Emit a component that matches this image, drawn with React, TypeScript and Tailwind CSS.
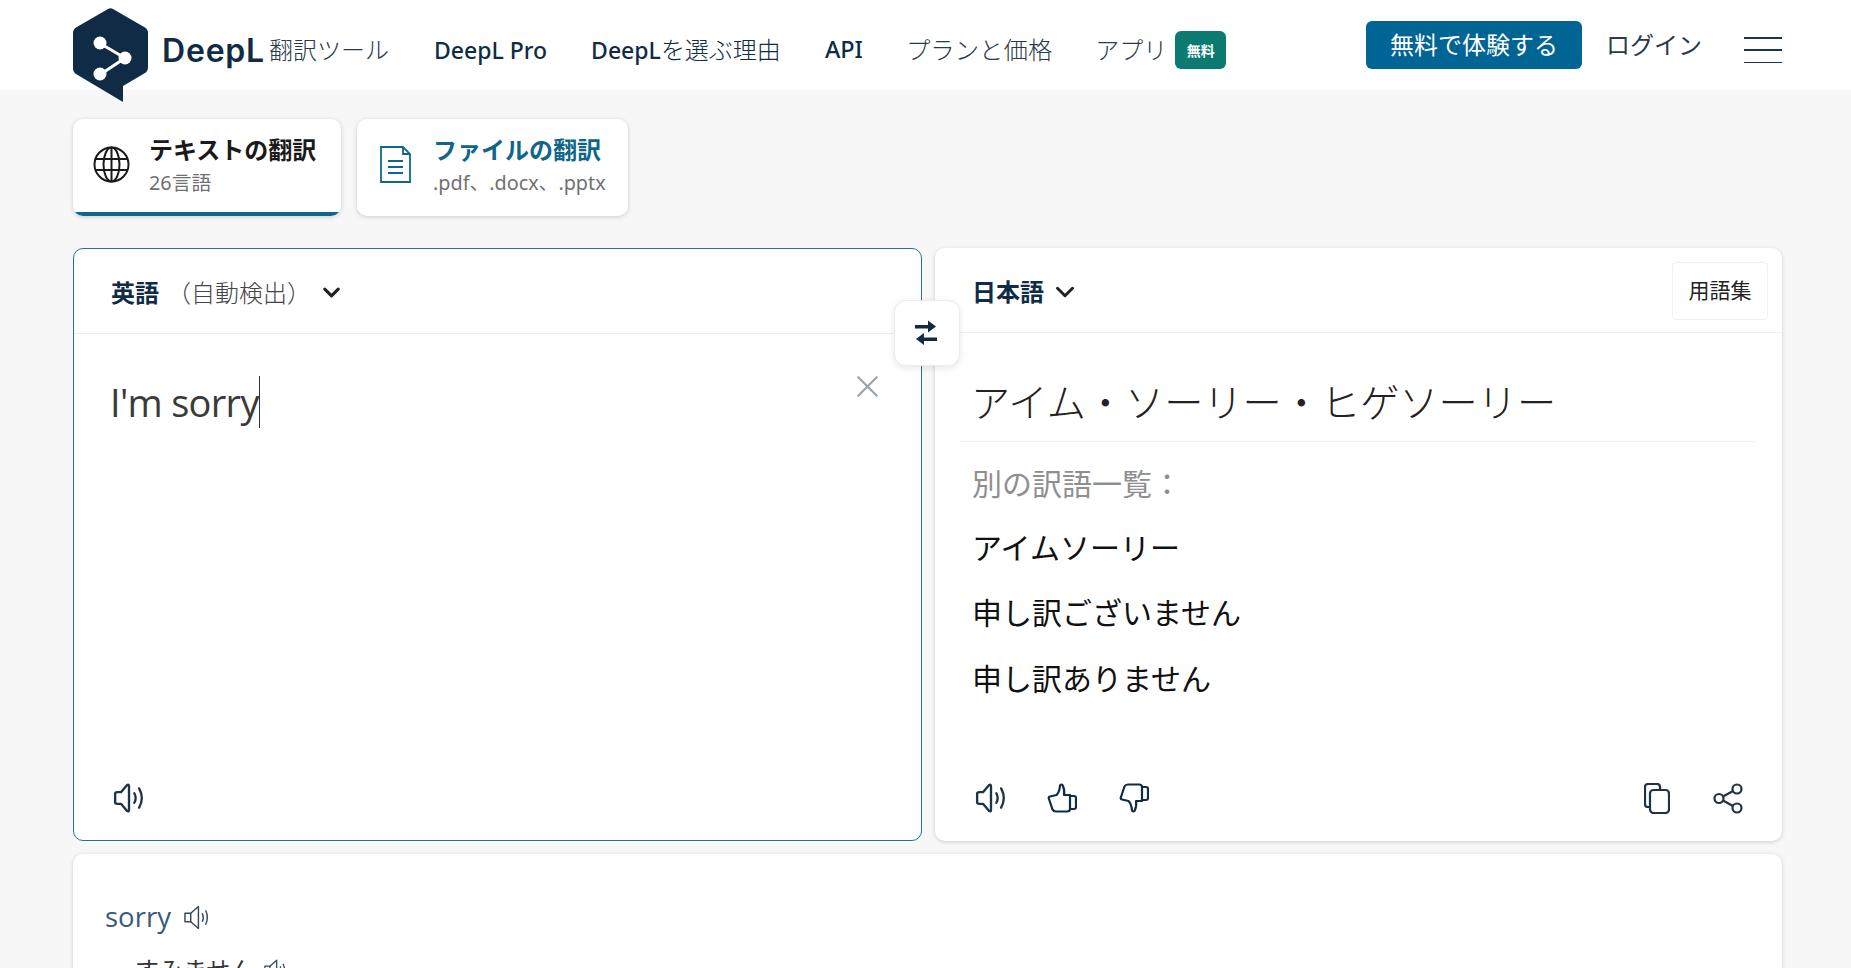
import { ChevronDown, X } from 'lucide-react';

const NAVY = '#0f2b46';

function Logo() {
  return (
    <svg className="w-[75px] h-[94px] shrink-0" viewBox="0 0 75 94" aria-hidden="true">
      <path
        d="M35 1 Q37.500 -0.500 40 1 L72 19.500 Q75 21.500 75 25 L75 59 Q75 63 72 65 L50 78 L50 94 L3 66 Q0 64 0 60 L0 25 Q0 21.500 3 19.500 Z"
        fill="#0f2b46"
      />
      <path d="M28 36 L52 50 L28 66" fill="none" stroke="#fff" strokeWidth="3" />
      <circle cx="27" cy="35" r="6.500" fill="#fff" />
      <circle cx="52" cy="50" r="6.500" fill="#fff" />
      <circle cx="27" cy="66" r="6.500" fill="#fff" />
    </svg>
  );
}

function Speaker({ className }: { className: string }) {
  return (
    <svg className={className} viewBox="0 0 30 28" fill="none" stroke="currentColor" strokeWidth="2.200" strokeLinecap="round" strokeLinejoin="round" aria-hidden="true">
      <path d="M2 10 L2 18 Q2 19.500 4 19.500 L7.500 19.500 L13 26 Q15 27.500 15 25 L15 3 Q15 .8 13 2 L7.500 8.500 L4 8.500 Q2 8.500 2 10 Z" />
      <path d="M20 9.500 Q22.500 14 20 18.500" />
      <path d="M24.500 5 Q29.500 14 24.500 23" />
    </svg>
  );
}

// the dictionary section has a thinner speaker with a box behind the cone
function SmallSpeaker({ className }: { className: string }) {
  return (
    <svg className={className} viewBox="0 0 26 26" fill="none" stroke="currentColor" strokeWidth="1.500" strokeLinejoin="round" aria-hidden="true">
      <path d="M1 8.500 H7 V17.500 H1 Z" />
      <path d="M7 8.500 L15 1.500 V24.500 L7 17.500" />
      <path d="M19 8.500 Q21 13 19 17.500" />
      <path d="M22.500 5.500 Q26 13 22.500 20.500" />
    </svg>
  );
}

function ThumbUp({ down }: { down?: boolean }) {
  return (
    <svg className={`w-[30px] h-[30px] ${down ? 'rotate-180 -scale-x-100' : ''}`} viewBox="0 0 30 30" fill="none" stroke={NAVY} strokeWidth="2.200" strokeLinecap="round" strokeLinejoin="round" aria-hidden="true">
      <path d="M2 16 Q1 14 3 13.500 L9.500 12 Q12.500 9 13 2.500 Q14 .8 15.500 2 Q18 7 17 12 L23 12 L23 26 Q23 28.500 20 28.500 L9 28.500 Q6.500 28.500 5.500 26.500 Z" />
      <path d="M23 13 L27 13 Q29 13 29 15 L29 24 Q29 26 27 26 L23 26" />
    </svg>
  );
}

function Tab({ title, sub, active, icon }: { title: string; sub: string; active?: boolean; icon: React.ReactNode }) {
  return (
    <div className={`relative h-[97px] flex items-center rounded-[10px] bg-white overflow-hidden shadow-[0_1px_4px_rgba(30,50,70,0.22)] ${active ? 'w-[268px] pl-[20px]' : 'w-[271px] pl-[23px]'}`}>
      <div className="mb-[6px] flex">{icon}</div>
      <div className={`flex flex-col mb-[4px] ${active ? 'ml-[19px]' : 'ml-[22px]'}`}>
        <span className={`text-[24px] leading-[32px] font-bold ${active ? 'text-[#1a1a1a]' : 'text-[#0f6688]'}`}>{title}</span>
        <span className="text-[19.800px] leading-[30px] text-[#707070] mt-[2px]">{sub}</span>
      </div>
      {active && <div className="absolute left-0 right-0 bottom-0 h-[4px] bg-[#0f6688]" />}
    </div>
  );
}

export default function App() {
  return (
    <div className="h-[968px] w-[1851px] overflow-hidden bg-[#f7f7f7] font-['Noto_Sans','Noto_Sans_CJK_JP',sans-serif] text-[#1a1a1a]">
      <header className="h-[90px] bg-white pl-[73px] pr-[69px] flex items-start">
        <div className="mt-[8px] relative z-10"><Logo /></div>
        <span className="ml-[14px] mt-[29px] text-[32px] leading-[44px] font-semibold tracking-[0.800px] text-[#0f2b46] font-['Inter',sans-serif]">DeepL</span>
        <nav className="flex items-center h-[100px] text-[24px] text-[#0f2b46] font-light">
          <span className="ml-[4px] text-[#2b3a48]">翻訳ツール</span>
          <span className="ml-[45px] font-medium text-[23px]">DeepL Pro</span>
          <span className="ml-[44px]"><span className="font-medium text-[23px]">DeepL</span>を選ぶ理由</span>
          <span className="ml-[44px] font-medium text-[23.500px]">API</span>
          <span className="ml-[43px] text-[24.400px] text-[#2b3a48]">プランと価格</span>
          <span className="ml-[43px] text-[#2b3a48]">アプリ</span>
          <span className="ml-[8px] w-[51px] h-[38px] rounded-[6px] bg-[#0b7a70] text-white text-[14px] font-bold flex items-center justify-center">無料</span>
        </nav>
        <button className="ml-auto mt-[21px] w-[216px] h-[48px] rounded-[6px] bg-[#006494] text-white text-[24px] leading-none">無料で体験する</button>
        <span className="ml-[24px] mt-[28px] text-[24px] leading-[34px] text-[#2b3a48]">ログイン</span>
        <div className="ml-[42px] mt-[37px] w-[38px] h-[26px] flex flex-col justify-between">
          <div className="h-[1.5px] bg-[#1f3347]" />
          <div className="h-[1.5px] bg-[#1f3347]" />
          <div className="h-[1.5px] bg-[#1f3347]" />
        </div>
      </header>

      <main className="pl-[73px] pr-[69px]">
        <div className="flex gap-[16px] pt-[29px]">
          <Tab
            active
            title="テキストの翻訳"
            sub="26言語"
            icon={
              <svg className="w-[37px] h-[37px] shrink-0" viewBox="0 0 37 37" fill="none" stroke="#1a1a1a" strokeWidth="2" aria-hidden="true">
                <circle cx="18.500" cy="18.500" r="17" />
                <ellipse cx="18.500" cy="18.500" rx="8" ry="17" />
                <path d="M18.500 1.500 V35.500 M2.500 13 H34.500 M2.500 24 H34.500" />
              </svg>
            }
          />
          <Tab
            title="ファイルの翻訳"
            sub=".pdf、.docx、.pptx"
            icon={
              <svg className="w-[31px] h-[37px] shrink-0" viewBox="0 0 31 37" fill="none" stroke="#0f6688" strokeWidth="1.800" aria-hidden="true">
                <path d="M1 1 H23 L30 8 V36 H1 Z M23 1 V8 H30" />
                <path d="M8 15 H23 M8 21 H23 M8 27 H23" />
              </svg>
            }
          />
        </div>

        <div className="relative flex gap-[13px] mt-[32px] h-[593px]">
          <section className="w-[849px] flex flex-col rounded-[10px] bg-white border border-[#2a6f8f] relative">
            <div className="h-[85px] flex items-center pl-[37px] pt-[3px] border-b border-[#eeeeee]">
              <span className="text-[24px] font-bold text-[#0f2b46]">英語</span>
              <span className="ml-[8px] text-[24px] text-[#444] font-light">（自動検出）</span>
              <ChevronDown className="ml-[7px] mb-[1px] w-[27px] h-[27px] text-[#222]" strokeWidth={2.800} />
            </div>
            <div className="flex-1 relative pl-[36px] pt-[42px]">
              <div className="flex items-center h-[52px]">
                <span className="text-[38px] leading-[52px] text-[#3a3a3a] font-['Open_Sans',sans-serif] tracking-[-0.700px]">I'm sorry</span>
                <span className="w-px h-[52px] bg-[#333]" />
              </div>
              <X className="absolute right-[35px] top-[34px] w-[37px] h-[37px] text-[#9aa3aa]" strokeWidth={1.400} />
            </div>
            <div className="h-[85px] pl-[39px] pt-[28px] text-[#1f3347]">
              <Speaker className="w-[32px] h-[30px]" />
            </div>
          </section>

          <section className="flex-1 flex flex-col rounded-[10px] bg-white shadow-[0_1px_4px_rgba(30,50,70,0.2)]">
            <div className="h-[85px] shrink-0 flex items-center pl-[37px] pr-[14px] pt-[4px] border-b border-[#eeeeee]">
              <span className="text-[24px] font-bold text-[#0f2b46]">日本語</span>
              <ChevronDown className="ml-[6px] w-[30px] h-[30px] text-[#222]" strokeWidth={2.400} />
              <button className="ml-auto mb-[3px] w-[96px] h-[58px] rounded-[4px] border border-[#f0f0f0] text-[21px] text-[#222]">用語集</button>
            </div>
            <div className="mx-[26px] h-[109px] flex items-center pl-[10px] pt-[30px] border-b border-[#eeeeee] text-[39.200px] text-[#222] font-light whitespace-nowrap">
              アイム・ソーリー・ヒゲソーリー
            </div>
            <div className="pl-[37px] pt-[19px] text-[30px] leading-[45px]">
              <div className="text-[#8f8f8f]">別の訳語一覧：</div>
              <div className="mt-[19px] text-[#111]">アイムソーリー</div>
              <div className="mt-[20px] text-[#111]">申し訳ございません</div>
              <div className="mt-[21px] text-[#111]">申し訳ありません</div>
            </div>
            <div className="mt-auto h-[85px] pl-[40px] pr-[39px] pt-[27px] flex items-start text-[#1f3347]">
              <Speaker className="w-[32px] h-[30px]" />
              <div className="ml-[40px]"><ThumbUp /></div>
              <div className="ml-[42px]"><ThumbUp down /></div>
              <svg className="ml-auto w-[26px] h-[31px]" viewBox="0 0 26 31" fill="none" stroke="currentColor" strokeWidth="2.200" strokeLinejoin="round" aria-hidden="true">
                <path d="M5 24 H4 Q1 24 1 21 V4 Q1 1 4 1 H13 Q16 1 16 4 V6" />
                <rect x="6" y="7" width="19" height="23" rx="3.500" />
              </svg>
              <svg className="ml-[43px] w-[30px] h-[31px]" viewBox="0 0 30 31" fill="none" stroke="currentColor" strokeWidth="2.200" aria-hidden="true">
                <circle cx="24" cy="6" r="4.500" />
                <circle cx="6" cy="15.500" r="4.500" />
                <circle cx="24" cy="25" r="4.500" />
                <path d="M10 13.500 L20 8 M10 17.500 L20 23" />
              </svg>
            </div>
          </section>

          <button className="absolute left-[821px] top-[52px] w-[66px] h-[66px] rounded-[12px] bg-white border border-[#ececec] shadow-[0_2px_6px_rgba(30,50,70,0.12)] flex items-center justify-center">
            <svg className="w-[22px] h-[28px] -ml-[2px]" viewBox="0 0 22 26" fill={NAVY} aria-hidden="true">
              <path d="M0 5 H13 V0.500 L21 6.500 L13 12.500 V8.500 H0 Z" />
              <path d="M22 17.500 H9 V13 L1 19 L9 25 V21 H22 Z" />
            </svg>
          </button>
        </div>

        <div className="mt-[13px] h-[300px] rounded-[10px] bg-white shadow-[0_1px_4px_rgba(30,50,70,0.2)] pl-[32px] pt-[43px]">
          <div className="flex items-center h-[40px]">
            <span className="text-[27.500px] leading-[40px] text-[#3a5a7c] font-['Open_Sans',sans-serif]">sorry</span>
            <SmallSpeaker className="ml-[13px] w-[25px] h-[25px] text-[#33495e]" />
          </div>
          <div className="flex items-center mt-[17px] pl-[30px] text-[24px] leading-[32px] text-[#333]">
            <span>すみません</span>
            <SmallSpeaker className="ml-[10px] w-[22px] h-[22px] text-[#33495e]" />
          </div>
        </div>
      </main>
    </div>
  );
}
